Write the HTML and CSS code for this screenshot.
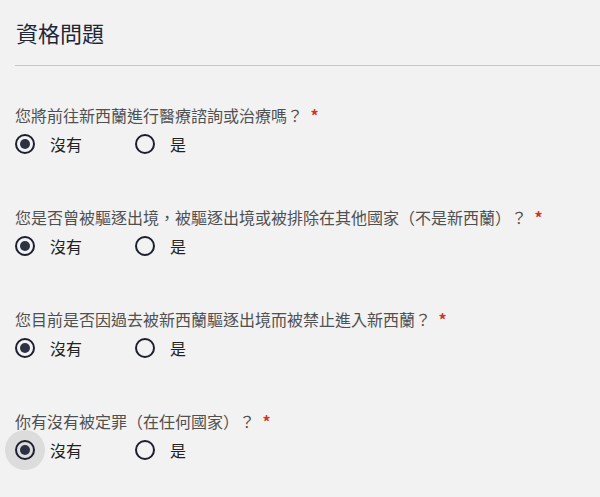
FILE: index.html
```html
<!DOCTYPE html>
<html lang="zh-Hant">
<head>
    <meta charset="UTF-8">
    <meta name="viewport" content="width=device-width, initial-scale=1.0">
    <title>資格問題</title>
    <link rel="stylesheet" href="styles.css">
</head>
<body>
    <div class="section">
        <h2 class="section-title">資格問題</h2>

        <div class="question">
            <div class="label">您將前往新西蘭進行醫療諮詢或治療嗎？ <span class="req">*</span></div>
            <div class="options">
                <label class="option"><span class="radio checked"></span>沒有</label>
                <label class="option"><span class="radio"></span>是</label>
            </div>
        </div>

        <div class="question">
            <div class="label">您是否曾被驅逐出境，被驅逐出境或被排除在其他國家（不是新西蘭）？ <span class="req">*</span></div>
            <div class="options">
                <label class="option"><span class="radio checked"></span>沒有</label>
                <label class="option"><span class="radio"></span>是</label>
            </div>
        </div>

        <div class="question">
            <div class="label">您目前是否因過去被新西蘭驅逐出境而被禁止進入新西蘭？ <span class="req">*</span></div>
            <div class="options">
                <label class="option"><span class="radio checked"></span>沒有</label>
                <label class="option"><span class="radio"></span>是</label>
            </div>
        </div>

        <div class="question">
            <div class="label">你有沒有被定罪（在任何國家）？ <span class="req">*</span></div>
            <div class="options">
                <label class="option"><span class="radio checked focus"></span>沒有</label>
                <label class="option"><span class="radio"></span>是</label>
            </div>
        </div>
    </div>
</body>
</html>
```

FILE: styles.css
```css
body {
    margin: 0;
    background: #f2f2f2;
    font-family: "Noto Sans CJK TC", "Noto Sans", sans-serif;
}
.section {
    padding: 0 0 48px 15px;
}
.section-title {
    margin: 0;
    padding: 17px 0 18px 1px;
    font-size: 22px;
    line-height: 30px;
    font-weight: normal;
    color: #1f2638;
    border-bottom: 1px solid #c8c8c8;
}
.question {
    margin-top: 38px;
}
.question + .question {
    margin-top: 52px;
}
.label {
    font-size: 16px;
    line-height: 22px;
    color: #505050;
}
.req {
    color: #d4351c;
    font-weight: bold;
    margin-left: 4px;
}
.options {
    display: flex;
    margin-top: 8px;
}
.option {
    display: flex;
    align-items: center;
    width: 120px;
    font-size: 16px;
    line-height: 20px;
    color: #222;
}
.radio {
    position: relative;
    box-sizing: border-box;
    width: 20px;
    height: 20px;
    border: 2px solid #1b1f2e;
    border-radius: 50%;
    margin-right: 15px;
    flex-shrink: 0;
}
.radio.checked::after {
    content: "";
    position: absolute;
    left: 3px;
    top: 3px;
    width: 10px;
    height: 10px;
    border-radius: 50%;
    background: #2c3144;
}
.radio.focus::before {
    content: "";
    position: absolute;
    left: -12px;
    top: -12px;
    width: 40px;
    height: 40px;
    border-radius: 50%;
    background: #dcdcdc;
    z-index: -1;
}
```
